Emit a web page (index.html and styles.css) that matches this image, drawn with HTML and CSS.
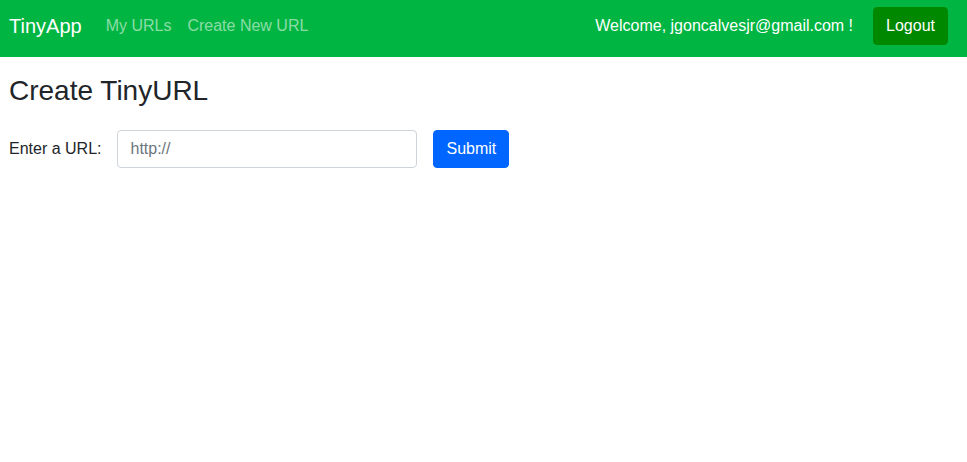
FILE: index.html
```html
<!DOCTYPE html>
<html lang="en">
<head>
<meta charset="utf-8">
<title>TinyApp</title>
<link rel="stylesheet" href="styles.css">
</head>
<body>
<nav class="navbar">
  <div class="nav-left">
    <a class="brand" href="#">TinyApp</a>
    <a class="nav-link" href="#">My URLs</a>
    <a class="nav-link" href="#">Create New URL</a>
  </div>
  <div class="nav-right">
    <span class="welcome">Welcome, jgoncalvesjr@gmail.com !</span>
    <button class="btn btn-logout" type="button">Logout</button>
  </div>
</nav>
<main class="content">
  <h1 class="title">Create TinyURL</h1>
  <form class="url-form">
    <label class="label" for="longURL">Enter a URL:</label>
    <input class="input" id="longURL" type="text" placeholder="http://">
    <button class="btn btn-primary" type="submit">Submit</button>
  </form>
</main>
</body>
</html>
```

FILE: styles.css
```css
* { box-sizing: border-box; }
html, body {
  margin: 0;
  padding: 0;
  background: #fff;
  font-family: "Liberation Sans", Arial, sans-serif;
  font-size: 16px;
  line-height: 1.5;
  color: #212529;
}
.navbar {
  display: flex;
  align-items: center;
  justify-content: space-between;
  background: #00b541;
  height: 57px;
  padding: 7px 19px 12px 9px;
}
.nav-left, .nav-right {
  display: flex;
  align-items: center;
}
.brand {
  font-size: 20px;
  color: #fff;
  text-decoration: none;
  margin-right: 16px;
}
.nav-link {
  color: rgba(255, 255, 255, 0.55);
  text-decoration: none;
  padding: 8px;
}
.welcome {
  color: #fff;
  margin-right: 20px;
}
.btn {
  font-family: inherit;
  font-size: 16px;
  line-height: 1.5;
  height: 38px;
  padding: 6px 12px;
  border: 1px solid transparent;
  border-radius: 4px;
  color: #fff;
  cursor: pointer;
}
.btn-logout {
  background: #008800;
  border-color: #008800;
}
.btn-primary {
  background: #0066ff;
  border-color: #0066ff;
}
.content {
  padding: 0 9px;
}
.title {
  font-size: 28px;
  font-weight: 400;
  line-height: 1.2;
  margin: 17px 0 0;
}
.url-form {
  display: flex;
  align-items: center;
  margin-top: 22px;
}
.label {
  margin-right: 16px;
}
.input {
  width: 300px;
  height: 38px;
  padding: 6px 12px;
  font-family: inherit;
  font-size: 16px;
  color: #212529;
  border: 1px solid #ced4da;
  border-radius: 4px;
  margin-right: 16px;
}
.input::placeholder {
  color: #6c757d;
}
```
